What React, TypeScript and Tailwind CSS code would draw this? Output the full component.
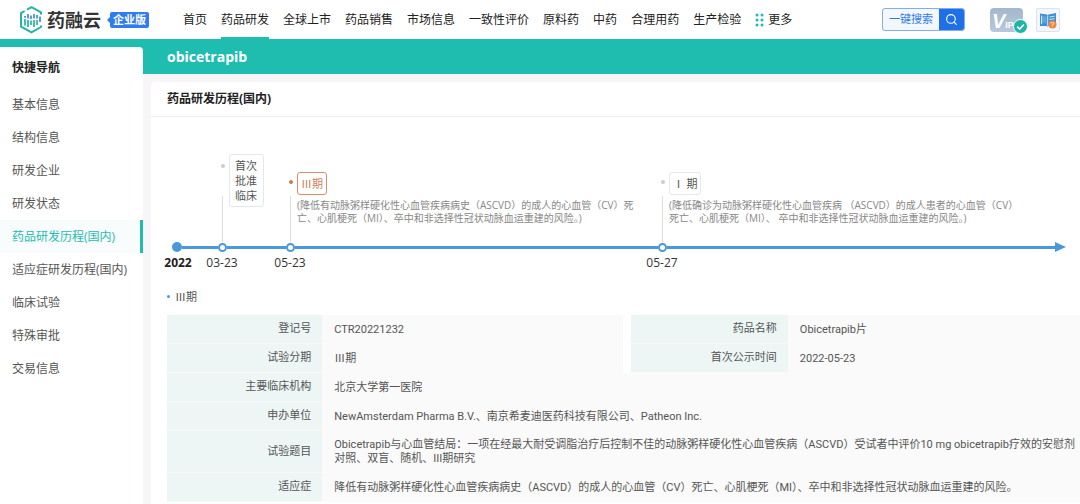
import { useState } from "react";
import { Search } from "lucide-react";

const navItems = [
  "首页",
  "药品研发",
  "全球上市",
  "药品销售",
  "市场信息",
  "一致性评价",
  "原料药",
  "中药",
  "合理用药",
  "生产检验",
];

const sideItems = [
  "基本信息",
  "结构信息",
  "研发企业",
  "研发状态",
  "药品研发历程(国内)",
  "适应症研发历程(国内)",
  "临床试验",
  "特殊审批",
  "交易信息",
];

type Milestone = {
  date: string;
  tag: string;
  desc?: string;
  active?: boolean;
  tall?: boolean;
};

const milestones: Milestone[] = [
  { date: "03-23", tag: "首次批准临床", tall: true },
  {
    date: "05-23",
    tag: "Ⅲ期",
    desc: "(降低有动脉粥样硬化性心血管疾病病史（ASCVD）的成人的心血管（CV）死亡、心肌梗死（MI）、卒中和非选择性冠状动脉血运重建的风险。)",
    active: true,
  },
  {
    date: "05-27",
    tag: "Ⅰ 期",
    desc: "(降低确诊为动脉粥样硬化性心血管疾病 （ASCVD）的成人患者的心血管（CV）死亡、心肌梗死（MI）、 卒中和非选择性冠状动脉血运重建的风险。)",
  },
];

const wideRows = [
  { label: "主要临床机构", value: "北京大学第一医院" },
  { label: "申办单位", value: "NewAmsterdam Pharma B.V.、南京希麦迪医药科技有限公司、Patheon Inc." },
  {
    label: "试验题目",
    value:
      "Obicetrapib与心血管结局：一项在经最大耐受调脂治疗后控制不佳的动脉粥样硬化性心血管疾病（ASCVD）受试者中评价10 mg obicetrapib疗效的安慰剂对照、双盲、随机、III期研究",
  },
  {
    label: "适应症",
    value: "降低有动脉粥样硬化性心血管疾病病史（ASCVD）的成人的心血管（CV）死亡、心肌梗死（MI）、卒中和非选择性冠状动脉血运重建的风险。",
  },
];

function Logo() {
  return (
    <a href="#" className="flex items-center">
      <svg width="24" height="28" viewBox="0 0 24 28" fill="none">
        <path d="M8 3.6 12.5 1.2 22 6.4V8.4" stroke="#22b5a5" strokeWidth="2" strokeLinejoin="round" />
        <path d="M5.6 5 2 7.2V20.6L12.5 26.4 22 21V19.4" stroke="#22b5a5" strokeWidth="2" strokeLinejoin="round" />
        <path d="M6 13v6.500M9 14v7M12 14.500v4.500M15 14v7M18 14v5" stroke="#22b5a5" strokeWidth="1.7" />
        <path d="M6 10v1.800M9 8v4.500M12 9.500v3.500M15 8v4.500M18 9v3.500M21 10.500v5.500" stroke="#3d8be8" strokeWidth="1.7" />
      </svg>
      <span className="ml-1 text-[18px] leading-6 font-bold text-[#333]">药融云</span>
      <svg className="ml-[6px]" width="3" height="6" viewBox="0 0 3 6">
        <path d="M3 0v6L0 3z" fill="#2f7bf0" />
      </svg>
      <span className="rounded-[2px] bg-[#2f7bf0] px-[3px] text-[11px] leading-4 font-bold text-white">企业版</span>
    </a>
  );
}

function MoreIcon() {
  return (
    <svg width="10" height="14" viewBox="0 0 10 14" fill="#1fbdb0">
      {[2, 7, 12].map((y) => (
        <g key={y}>
          <circle cx="2" cy={y} r="1.5" />
          <circle cx="7" cy={y} r="1.5" />
        </g>
      ))}
    </svg>
  );
}

function Header() {
  return (
    <header className="flex h-[39px] items-center bg-white pr-5 pl-[19px]">
      <Logo />
      <nav className="ml-[34px] flex h-full items-center gap-[14px] text-[12px] whitespace-nowrap text-[#222]">
        {navItems.map((item) => (
          <a
            key={item}
            href="#"
            className={
              item === "药品研发"
                ? "flex h-full items-center border-y-2 border-t-transparent border-b-[#1fbdb0]"
                : "flex h-full items-center"
            }
          >
            {item}
          </a>
        ))}
        <button type="button" className="flex items-center gap-[3px]">
          <MoreIcon />
          更多
        </button>
      </nav>
      <div className="ml-auto flex items-center">
        <button
          type="button"
          className="flex h-[23px] items-center overflow-hidden rounded-[3px] border border-[#7fadf0] bg-[#f3f8ff] text-[11px] text-[#2f7bea]"
        >
          <span className="px-[6px]">一键搜索</span>
          <span className="flex h-full w-[25px] items-center justify-center bg-[#1f6fe5] text-white">
            <Search size={13} strokeWidth={2} />
          </span>
        </button>
        <button type="button" aria-label="VIP" className="relative ml-[25px] h-6 w-[33px] rounded-[4px] bg-linear-to-b from-[#a4b7cc] to-[#b9c8da] text-white">
          <svg width="33" height="24" viewBox="0 0 33 24" fill="#fff" fontFamily="Liberation Sans, sans-serif" fontWeight="700">
            <text x="2" y="20">
              <tspan fontSize="20" fontStyle="italic">V</tspan>
              <tspan fontSize="9">IP</tspan>
            </text>
          </svg>
          <svg className="absolute top-[11px] left-[23px]" width="15" height="15" viewBox="0 0 15 15" fill="none">
            <circle cx="7.5" cy="7.5" r="7" fill="#1cb5a8" stroke="#fff" />
            <path d="M4.2 7.6 6.7 10l4.2-4.5" stroke="#fff" strokeWidth="1.6" />
          </svg>
        </button>
        <button type="button" aria-label="帮助" className="ml-[13px] flex size-6 items-center justify-center rounded-[2px] border border-[#dbe4f2] bg-[#f3f7fd]">
          <svg width="18" height="18" viewBox="0 0 18 18">
            <path d="M1 2.5 8 3.5l.8.8.7-.8L17 2v12l-7.500 1-1 .8-.8-.8H1z" fill="#3d8fd6" />
            <path d="M3 5l4.500.5v7L3 12z" fill="#5aa5e4" />
            <path d="M10.500 6l5-.8M10.500 8.500l5-.8M8.700 4.500v10.500M2.500 4.500v8.500" stroke="#e4f0fb" strokeWidth=".9" />
            <circle cx="13.500" cy="13.500" r="4" fill="#f0863a" />
            <text x="13.500" y="16" fontSize="7" textAnchor="middle" fill="#fff" fontFamily="Liberation Sans, sans-serif">?</text>
          </svg>
        </button>
      </div>
    </header>
  );
}

function Sidebar() {
  const [active, setActive] = useState("药品研发历程(国内)");

  return (
    <div className="flex w-[143px] shrink-0 flex-col bg-[#1fbdb0] pt-2">
      <aside className="flex-1 rounded-tr-[4px] bg-white">
        <h2 className="pl-3 text-[12px] leading-[41px] font-bold text-[#222]">快捷导航</h2>
        <ul className="text-[12px] leading-[33px]">
          {sideItems.map((item) => (
            <li key={item}>
              <a
                href="#"
                onClick={() => setActive(item)}
                className={
                  item === active
                    ? "block border-r-[3px] border-[#1fbdb0] bg-[#f8fcfc] pl-3 text-[#1fbdb0]"
                    : "block pl-3 text-[#555]"
                }
              >
                {item}
              </a>
            </li>
          ))}
        </ul>
      </aside>
    </div>
  );
}

function MilestoneCard({ item }: { item: Milestone }) {
  return (
    <div className="flex items-stretch gap-[2px] pr-5">
      <div className={item.tall ? "flex w-[9px] shrink-0 flex-col items-center pt-[10px]" : "flex w-[9px] shrink-0 flex-col items-center pt-[26px]"}>
        <span className={item.active ? "size-1 rounded-full bg-[#c87a55]" : "size-1 rounded-full bg-[#ccc]"} />
        <span className={item.tall ? "mt-7 w-px flex-1 bg-[#ddd]" : "mt-3 w-px flex-1 bg-[#ddd]"} />
      </div>
      <div className={item.tall ? "h-[88px]" : "h-[88px] pt-4"}>
        <span
          className={
            item.active
              ? "inline-block rounded-[3px] border border-[#d98f6c] px-[3px] py-[3px] font-['Noto_Sans_CJK_SC',sans-serif] text-[11px] leading-[15px] text-[#d0805c]"
              : item.tall
                ? "block w-[35px] rounded-[3px] border border-[#e3e8e8] px-[5px] py-[3px] text-[11px] leading-[15px] text-[#555]"
                : "inline-block rounded-[3px] border border-[#e3e8e8] px-[3px] py-[3px] font-['Noto_Sans_CJK_SC',sans-serif] text-[11px] leading-[15px] text-[#555]"
          }
        >
          {item.tag}
        </span>
        {item.desc && <p className="mt-1 max-w-[354px] text-[10px] leading-[13px] text-[#888]">{item.desc}</p>}
      </div>
    </div>
  );
}

function Timeline() {
  return (
    <div className="grid grid-cols-[minmax(0,46fr)_minmax(0,68fr)_minmax(0,372fr)_minmax(0,408fr)] pt-[37px] pr-[14px] pl-[21px]">
      <div />
      {milestones.map((item) => (
        <MilestoneCard key={item.date} item={item} />
      ))}

      <div className="flex items-center">
        <span className="size-[10px] rounded-full bg-[#4a98dc]" />
        <span className="h-[3px] flex-1 bg-[#4a98dc]" />
      </div>
      {milestones.map((item, index) => (
        <div key={item.date} className="flex items-center">
          <span className="size-[9px] rounded-full border-2 border-[#4a98dc] bg-white" />
          <span className="h-[3px] flex-1 bg-[#4a98dc]" />
          {index === milestones.length - 1 && (
            <svg width="11" height="10" viewBox="0 0 11 10">
              <path d="M0 0l11 5L0 10z" fill="#4a98dc" />
            </svg>
          )}
        </div>
      ))}

      <div className="-ml-3 w-9 pt-[2px] text-center text-[12px] leading-[18px] font-bold text-[#222]">2022</div>
      {milestones.map((item) => (
        <div key={item.date} className="-ml-4 w-10 pt-[2px] text-center text-[12px] leading-[18px] text-[#333]">
          {item.date}
        </div>
      ))}
    </div>
  );
}

const labelClass = "border-b border-[#f6fbfa] bg-[#edf6f5] py-[7px] pr-[11px] text-right font-normal";
const valueClass = "bg-[#fafafa] py-[7px] pl-3";

function DetailTable() {
  return (
    <table className="w-full table-fixed border-separate border-spacing-0 font-['Roboto','Noto_Sans_CJK_SC',sans-serif] text-[11px] leading-[14px] text-[#555]">
      <colgroup>
        <col className="w-[17%]" />
        <col className="w-[33%]" />
        <col className="w-[18%]" />
        <col className="w-[32%]" />
      </colgroup>
      <tbody>
        <tr>
          <th scope="row" className={labelClass}>登记号</th>
          <td className={valueClass}>CTR20221232</td>
          <th scope="row" className={`${labelClass} border-l-8 border-l-white`}>药品名称</th>
          <td className={valueClass}>Obicetrapib片</td>
        </tr>
        <tr>
          <th scope="row" className={labelClass}>试验分期</th>
          <td className={valueClass}>Ⅲ期</td>
          <th scope="row" className={`${labelClass} border-l-8 border-l-white`}>首次公示时间</th>
          <td className={valueClass}>2022-05-23</td>
        </tr>
        {wideRows.map((row) => (
          <tr key={row.label}>
            <th scope="row" className={labelClass}>{row.label}</th>
            <td colSpan={3} className={valueClass}>{row.value}</td>
          </tr>
        ))}
      </tbody>
    </table>
  );
}

export default function App() {
  return (
    <div className="flex min-h-screen flex-col bg-[#f7f5f7] font-['Open_Sans','Noto_Sans_CJK_SC',sans-serif]">
      <Header />
      <div className="flex flex-1">
        <Sidebar />
        <div className="flex min-w-0 flex-1 flex-col">
          <h1 className="bg-[#1fbdb0] pl-6 text-[14px] leading-[35px] font-bold text-white">obicetrapib</h1>
          <main className="mt-2 ml-2 flex-1 rounded-tl-[4px] bg-white">
            <h2 className="border-b border-[#eee] pl-4 text-[12px] leading-[34px] font-bold text-[#222]">
              药品研发历程(国内)
            </h2>
            <Timeline />
            <section className="pl-4">
              <h3 className="flex items-center gap-[5px] pt-[16px] pb-[10px] font-['Noto_Sans_CJK_SC',sans-serif] text-[11px] leading-[17px] text-[#555]">
                <span className="size-[3px] rounded-full bg-[#4a98dc]" />
                Ⅲ期
              </h3>
              <DetailTable />
            </section>
          </main>
        </div>
      </div>
    </div>
  );
}
